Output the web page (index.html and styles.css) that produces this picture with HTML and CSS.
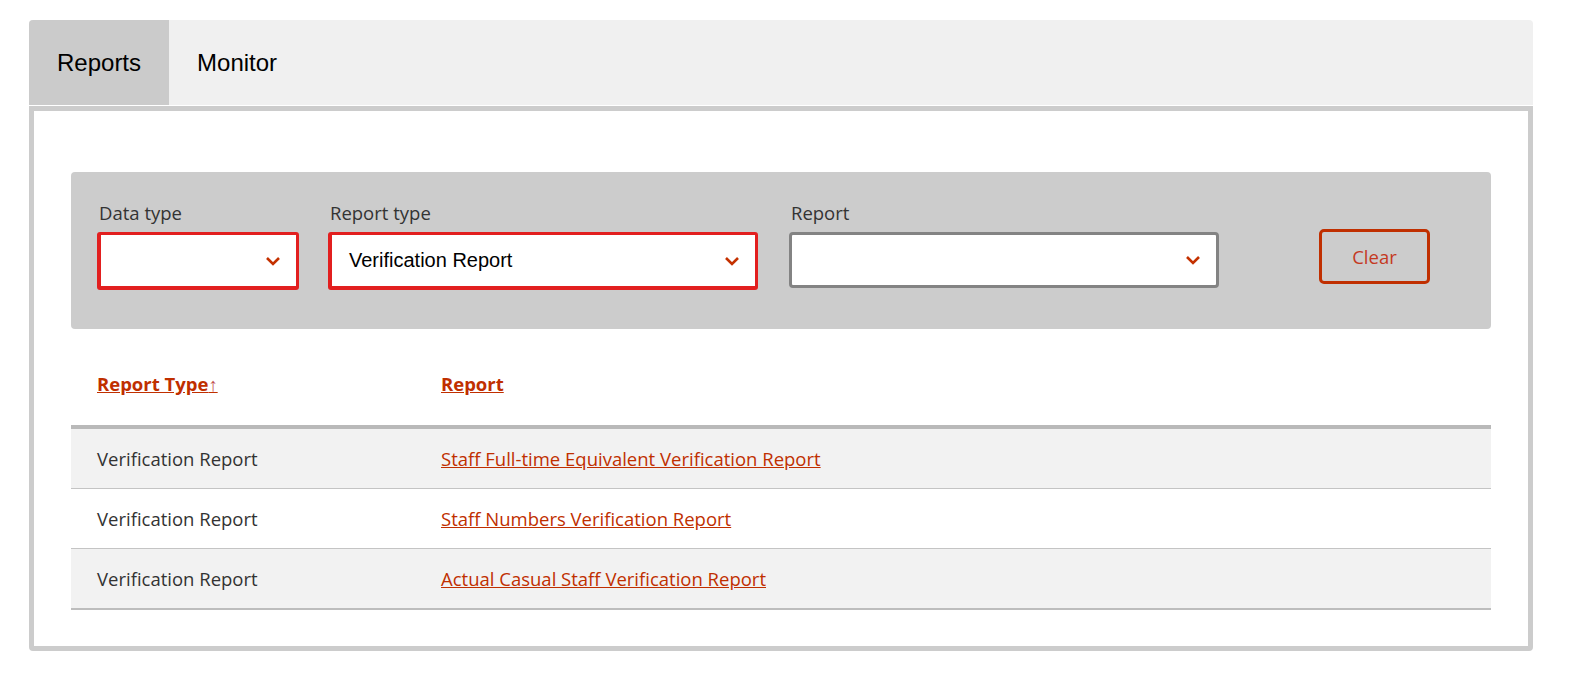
FILE: index.html
```html
<html>
<head>
<title>Reports</title>
<link rel="stylesheet" href="styles.css">
</head>
<body>
<div class="wrap">
	<div class="tabs">
		<div class="tab tab-active">Reports</div>
		<div class="tab">Monitor</div>
	</div>
	<div class="panel">
		<div class="filters">
			<div class="field field-data">
				<div class="label">Data type</div>
				<div class="select select-error">
					<span class="value"></span>
					<svg class="chev" width="16" height="10" viewBox="0 0 16 10"><path d="M2 2 L8 8 L14 2" fill="none" stroke="#c43100" stroke-width="2.6"/></svg>
				</div>
			</div>
			<div class="field field-type">
				<div class="label">Report type</div>
				<div class="select select-error">
					<span class="value">Verification Report</span>
					<svg class="chev" width="16" height="10" viewBox="0 0 16 10"><path d="M2 2 L8 8 L14 2" fill="none" stroke="#c43100" stroke-width="2.6"/></svg>
				</div>
			</div>
			<div class="field field-report">
				<div class="label">Report</div>
				<div class="select">
					<span class="value"></span>
					<svg class="chev" width="16" height="10" viewBox="0 0 16 10"><path d="M2 2 L8 8 L14 2" fill="none" stroke="#c43100" stroke-width="2.6"/></svg>
				</div>
			</div>
			<button class="clear">Clear</button>
		</div>

		<table class="results">
			<thead>
				<tr>
					<th class="col1"><a href="#">Report Type<span class="arrow">&#8593;</span></a></th>
					<th><a href="#">Report</a></th>
				</tr>
			</thead>
			<tbody>
				<tr class="odd">
					<td class="col1">Verification Report</td>
					<td><a href="#">Staff Full-time Equivalent Verification Report</a></td>
				</tr>
				<tr>
					<td class="col1">Verification Report</td>
					<td><a href="#">Staff Numbers Verification Report</a></td>
				</tr>
				<tr class="odd last">
					<td class="col1">Verification Report</td>
					<td><a href="#">Actual Casual Staff Verification Report</a></td>
				</tr>
			</tbody>
		</table>
	</div>
</div>
</body>
</html>
```

FILE: styles.css
```css
html {
    overflow: hidden;
}
body {
    margin: 0;
    background: #ffffff;
    font-family: "Open Sans", "Noto Sans", sans-serif;
    color: #333333;
}
.wrap {
    width: 1504px;
    margin: 20px 0 0 29px;
}
.tabs {
    display: flex;
    height: 85px;
    background-color: #f0f0f0;
    border-radius: 4px 4px 0 0;
}
.tab {
    padding: 0 28px;
    line-height: 85px;
    font-family: "Liberation Sans", Arial, sans-serif;
    font-size: 24px;
    color: #000000;
}
.tab-active {
    background-color: #cbcbcb;
    border-radius: 4px 0 0 0;
}
.panel {
    margin-top: 1px;
    border: 5px solid #cccccc;
    border-radius: 0 0 4px 4px;
    padding: 61px 37px 36px 37px;
}
.filters {
    display: flex;
    align-items: flex-end;
    background-color: #cccccc;
    border-radius: 4px;
    padding: 29px 26px 39px 26px;
}
.field {
    display: flex;
    flex-direction: column;
}
.field-data {
    width: 202px;
    margin-right: 29px;
}
.field-type {
    width: 430px;
    margin-right: 31px;
}
.field-report {
    width: 430px;
    margin-right: 100px;
}
.label {
    font-size: 18.5px;
    line-height: 24px;
    margin: 0 0 7px 2px;
    color: #333333;
}
.select {
    display: flex;
    align-items: center;
    height: 56px;
    box-sizing: border-box;
    background: #ffffff;
    border: 3px solid #838383;
    border-radius: 4px;
    padding: 0 17px;
}
.select-error {
    height: 58px;
    border-color: #e21f1f;
    border-left-width: 4px;
    border-bottom-width: 4px;
    border-radius: 3px;
}
.field-report .select {
    margin-bottom: 2px;
}
.value {
    flex: 1;
    font-family: "Liberation Sans", Arial, sans-serif;
    font-size: 20px;
    color: #000000;
}
.chev {
    margin-right: -2px;
}
.clear {
    width: 111px;
    height: 55px;
    margin-bottom: 6px;
    background: transparent;
    border: 3px solid #c02f00;
    border-radius: 5px;
    font-family: "Open Sans", "Noto Sans", sans-serif;
    font-size: 18.5px;
    color: #c4391f;
}
.results {
    width: 100%;
    border-collapse: collapse;
    font-size: 18.5px;
}
.results th {
    text-align: left;
    padding: 44px 26px 30px 26px;
    line-height: 22px;
    font-weight: bold;
    border-bottom: 4px solid #b9b9b9;
}
.results a {
    color: #c02f00;
}
.arrow {
    font-weight: normal;
    color: #c0504d;
}
.results td {
    padding: 0 26px;
    line-height: 59px;
    border-bottom: 1px solid #c4c4c4;
}
.col1 {
    width: 292px;
}
.odd {
    background-color: #f2f2f2;
}
.last td {
    border-bottom: 2px solid #bdbdbd;
}
```
